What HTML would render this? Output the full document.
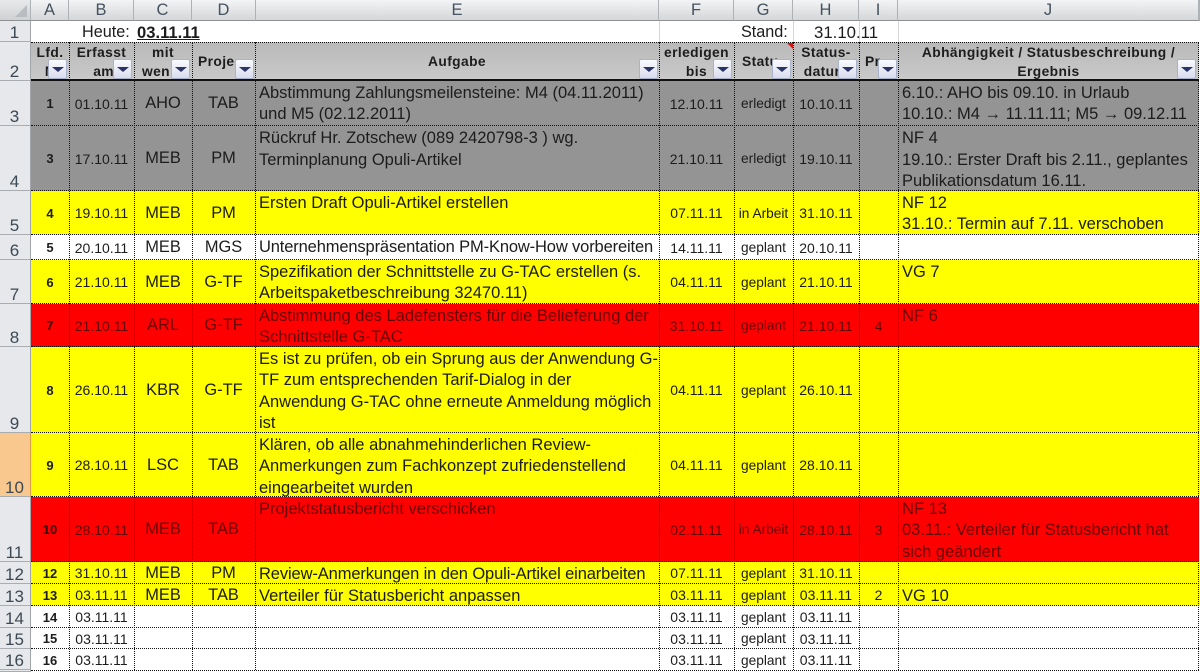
<!DOCTYPE html>
<html><head><meta charset="utf-8"><style>
html,body{margin:0;padding:0}
body{width:1200px;height:672px;overflow:hidden;position:relative;background:#fff;font-family:"Liberation Sans",sans-serif;color:#1c1c1c}
div{box-sizing:border-box}
.ch{position:absolute;top:0;height:21px;background:linear-gradient(#f3f4f5,#d4d6d8);border-right:1px solid #aeb2b6;border-bottom:1px solid #8f9295;font-size:16.5px;color:#45525f;text-align:center;line-height:21px}
.rh{position:absolute;left:0;width:31px;background:#e6e8eb;border-bottom:1px solid #a9adb1;border-right:1px solid #a2a6aa;font-size:17px;color:#3c4955;text-align:center}
.rh span{position:absolute;left:0;right:1px;bottom:-2px;line-height:21px}
.r{position:absolute;left:31px;width:1168px;border-bottom:1px dotted #111}
.gr{background:#949494}.ye{background:#ff0}.re{background:#f00;color:#600}.wh{background:#fff}
.c{position:absolute;top:1px;bottom:0;display:flex;align-items:center;justify-content:center;white-space:nowrap}
.a{left:0;width:38px;font:bold 13px "Liberation Sans",sans-serif}
.b{left:38px;width:65px;font-size:14px}
.cc{left:103px;width:58px;font-size:16.4px}
.d{left:161px;width:63px;font-size:16.4px}
.f{left:628px;width:75px;font-size:14px}
.g{left:703px;width:59px;font-size:13.7px}
.h{left:762px;width:66px;font-size:14px}
.i{left:828px;width:39px;font-size:14px}
.t{position:absolute;top:1.5px;font-size:16.5px;line-height:21.6px;white-space:nowrap}
.e{left:228px}.j{left:871px}
.v{position:absolute;width:0;top:42px;height:628px;border-left:1px dotted #111}
.hd{position:absolute;left:31px;top:42px;width:1168px;height:39px;background:linear-gradient(#b9b9b9,#c9c9c9);border-bottom:2px solid #111;border-top:1px dotted #111}
.ht{position:absolute;font:bold 13.8px/19px "Liberation Sans",sans-serif;text-align:center;color:#1d1d1d;white-space:nowrap;letter-spacing:.4px}
.fb{position:absolute;top:59px;width:19px;height:20px;background:linear-gradient(#fafbfe,#d9dcee);border:1px solid #a9b3c9;border-radius:2px}
.fb:after{content:"";position:absolute;left:3px;top:7px;border-left:6px solid transparent;border-right:6px solid transparent;border-top:5px solid #2b3468}
.l1{position:absolute;top:22px;font-size:16.2px;line-height:21px;white-space:nowrap}
.lg{position:absolute;top:21px;height:21px;width:1px;background:#d6d6d6}
</style></head><body>
<div class="ch" style="left:0;width:31px;background:linear-gradient(#e8e9ea,#cfd1d3)"></div>
<div style="position:absolute;left:15px;top:5px;border-left:12px solid transparent;border-bottom:12px solid #b9bcc0"></div>
<div class="ch" style="left:31px;width:38px">A</div>
<div class="ch" style="left:69px;width:65px">B</div>
<div class="ch" style="left:134px;width:58px">C</div>
<div class="ch" style="left:192px;width:64px">D</div>
<div class="ch" style="left:256px;width:403px">E</div>
<div class="ch" style="left:659px;width:75px">F</div>
<div class="ch" style="left:734px;width:59px">G</div>
<div class="ch" style="left:793px;width:66px">H</div>
<div class="ch" style="left:859px;width:39px">I</div>
<div class="ch" style="left:898px;width:301px">J</div>
<div class="ch" style="left:1199px;width:1px"></div>

<div class="rh" style="top:21px;height:21px"><span>1</span></div>
<div class="rh" style="top:42px;height:39px"><span>2</span></div>
<div class="rh" style="top:81px;height:45px"><span>3</span></div>
<div class="rh" style="top:126px;height:65px"><span>4</span></div>
<div class="rh" style="top:191px;height:44px"><span>5</span></div>
<div class="rh" style="top:235px;height:25px"><span>6</span></div>
<div class="rh" style="top:260px;height:44px"><span>7</span></div>
<div class="rh" style="top:304px;height:43px"><span>8</span></div>
<div class="rh" style="top:347px;height:86px"><span>9</span></div>
<div class="rh" style="top:433px;height:64px;background:#f8c88f;border-right-color:#e29a4a"><span>10</span></div>
<div class="rh" style="top:497px;height:65px"><span>11</span></div>
<div class="rh" style="top:562px;height:22px"><span>12</span></div>
<div class="rh" style="top:584px;height:22px"><span>13</span></div>
<div class="rh" style="top:606px;height:22px"><span>14</span></div>
<div class="rh" style="top:628px;height:21px"><span>15</span></div>
<div class="rh" style="top:649px;height:21px"><span>16</span></div>
<div class="rh" style="top:670px;height:2px"></div>

<div class="lg" style="left:659px"></div><div class="lg" style="left:793px"></div><div class="lg" style="left:859px"></div><div class="lg" style="left:898px"></div>
<div class="l1" style="left:82px">Heute:</div>
<div class="l1" style="left:137px;font-weight:bold;text-decoration:underline;font-size:16.6px">03.11.11</div>
<div class="l1" style="left:741px">Stand:</div>
<div class="l1" style="left:814px;font-size:16.8px">31.10.11</div>

<div class="hd"></div>
<div class="ht" style="left:31px;width:38px;top:43px">Lfd.<br>N</div>
<div class="ht" style="left:69px;width:65px;top:43px">Erfasst<br>&nbsp;am</div>
<div class="ht" style="left:134px;width:58px;top:43px">mit<br><span style="margin-right:14px">wen</span></div>
<div class="ht" style="left:198px;top:52px">Proje</div>
<div class="ht" style="left:255px;width:404px;top:52px">Aufgabe</div>
<div class="ht" style="left:659px;width:75px;top:43px">erledigen<br>bis</div>
<div class="ht" style="left:742px;top:52px">Statu</div>
<div class="ht" style="left:793px;width:66px;top:43px">Status-<br><span style="margin-right:8px">datur</span></div>
<div class="ht" style="left:865px;top:52px">Pr</div>
<div class="ht" style="left:898px;width:301px;top:43px">Abhängigkeit / Statusbeschreibung /<br>Ergebnis</div>
<div style="position:absolute;left:787px;top:43px;border-left:6px solid transparent;border-top:6px solid #e01010"></div>
<div class="fb" style="left:48px"></div><div class="fb" style="left:113px"></div><div class="fb" style="left:171px"></div><div class="fb" style="left:235px"></div><div class="fb" style="left:639px"></div><div class="fb" style="left:713px"></div><div class="fb" style="left:772px"></div><div class="fb" style="left:838px"></div><div class="fb" style="left:878px"></div><div class="fb" style="left:1177px"></div>

<div class="r gr" style="top:81px;height:45px"><div class="c a">1</div><div class="c b">01.10.11</div><div class="c cc">AHO</div><div class="c d">TAB</div><div class="t e">Abstimmung Zahlungsmeilensteine: M4 (04.11.2011)<br>und M5 (02.12.2011)</div><div class="c f">12.10.11</div><div class="c g">erledigt</div><div class="c h">10.10.11</div><div class="t j">6.10.: AHO bis 09.10. in Urlaub<br>10.10.: M4 → 11.11.11; M5 → 09.12.11</div></div>
<div class="r gr" style="top:126px;height:65px"><div class="c a">3</div><div class="c b">17.10.11</div><div class="c cc">MEB</div><div class="c d">PM</div><div class="t e" style="top:2px">Rückruf Hr. Zotschew (089 2420798-3 ) wg.<br>Terminplanung Opuli-Artikel</div><div class="c f">21.10.11</div><div class="c g">erledigt</div><div class="c h">19.10.11</div><div class="t j" style="top:2px">NF 4<br>19.10.: Erster Draft bis 2.11., geplantes<br>Publikationsdatum 16.11.</div></div>
<div class="r ye" style="top:191px;height:44px"><div class="c a">4</div><div class="c b">19.10.11</div><div class="c cc">MEB</div><div class="c d">PM</div><div class="t e">Ersten Draft Opuli-Artikel erstellen</div><div class="c f">07.11.11</div><div class="c g">in Arbeit</div><div class="c h">31.10.11</div><div class="t j">NF 12<br>31.10.: Termin auf 7.11. verschoben</div></div>
<div class="r wh" style="top:235px;height:25px"><div class="c a">5</div><div class="c b">20.10.11</div><div class="c cc">MEB</div><div class="c d">MGS</div><div class="t e" style="letter-spacing:-.14px">Unternehmenspräsentation PM-Know-How vorbereiten</div><div class="c f">14.11.11</div><div class="c g">geplant</div><div class="c h">20.10.11</div></div>
<div class="r ye" style="top:260px;height:44px"><div class="c a">6</div><div class="c b">21.10.11</div><div class="c cc">MEB</div><div class="c d">G-TF</div><div class="t e">Spezifikation der Schnittstelle zu G-TAC erstellen (s.<br>Arbeitspaketbeschreibung 32470.11)</div><div class="c f">04.11.11</div><div class="c g">geplant</div><div class="c h">21.10.11</div><div class="t j">VG 7</div></div>
<div class="r re" style="top:304px;height:43px"><div class="c a" style="color:#300">7</div><div class="c b">21.10.11</div><div class="c cc">ARL</div><div class="c d">G-TF</div><div class="t e">Abstimmung des Ladefensters für die Belieferung der<br>Schnittstelle G-TAC</div><div class="c f">31.10.11</div><div class="c g">geplant</div><div class="c h">21.10.11</div><div class="c i">4</div><div class="t j">NF 6</div></div>
<div class="r ye" style="top:347px;height:86px"><div class="c a">8</div><div class="c b">26.10.11</div><div class="c cc">KBR</div><div class="c d">G-TF</div><div class="t e">Es ist zu prüfen, ob ein Sprung aus der Anwendung G-<br>TF zum entsprechenden Tarif-Dialog in der<br>Anwendung G-TAC ohne erneute Anmeldung möglich<br>ist</div><div class="c f">04.11.11</div><div class="c g">geplant</div><div class="c h">26.10.11</div></div>
<div class="r ye" style="top:433px;height:64px"><div class="c a">9</div><div class="c b">28.10.11</div><div class="c cc">LSC</div><div class="c d">TAB</div><div class="t e">Klären, ob alle abnahmehinderlichen Review-<br>Anmerkungen zum Fachkonzept zufriedenstellend<br>eingearbeitet wurden</div><div class="c f">04.11.11</div><div class="c g">geplant</div><div class="c h">28.10.11</div></div>
<div class="r re" style="top:497px;height:65px"><div class="c a" style="color:#300">10</div><div class="c b">28.10.11</div><div class="c cc">MEB</div><div class="c d">TAB</div><div class="t e">Projektstatusbericht verschicken</div><div class="c f">02.11.11</div><div class="c g">in Arbeit</div><div class="c h">28.10.11</div><div class="c i">3</div><div class="t j">NF 13<br>03.11.: Verteiler für Statusbericht hat<br>sich geändert</div></div>
<div class="r ye" style="top:562px;height:22px"><div class="c a">12</div><div class="c b">31.10.11</div><div class="c cc">MEB</div><div class="c d">PM</div><div class="t e" style="letter-spacing:-.12px">Review-Anmerkungen in den Opuli-Artikel einarbeiten</div><div class="c f">07.11.11</div><div class="c g">geplant</div><div class="c h">31.10.11</div></div>
<div class="r ye" style="top:584px;height:22px"><div class="c a">13</div><div class="c b">03.11.11</div><div class="c cc">MEB</div><div class="c d">TAB</div><div class="t e">Verteiler für Statusbericht anpassen</div><div class="c f">03.11.11</div><div class="c g">geplant</div><div class="c h">03.11.11</div><div class="c i">2</div><div class="t j">VG 10</div></div>
<div class="r wh" style="top:606px;height:22px"><div class="c a">14</div><div class="c b">03.11.11</div><div class="c f">03.11.11</div><div class="c g">geplant</div><div class="c h">03.11.11</div></div>
<div class="r wh" style="top:628px;height:21px"><div class="c a">15</div><div class="c b">03.11.11</div><div class="c f">03.11.11</div><div class="c g">geplant</div><div class="c h">03.11.11</div></div>
<div class="r wh" style="top:649px;height:22px"><div class="c a">16</div><div class="c b">03.11.11</div><div class="c f">03.11.11</div><div class="c g">geplant</div><div class="c h">03.11.11</div></div>

<div class="v" style="left:69px"></div><div class="v" style="left:134px"></div><div class="v" style="left:192px"></div><div class="v" style="left:255px"></div><div class="v" style="left:659px"></div><div class="v" style="left:734px"></div><div class="v" style="left:793px"></div><div class="v" style="left:859px"></div><div class="v" style="left:898px"></div><div class="v" style="left:1198px"></div>
</body></html>
